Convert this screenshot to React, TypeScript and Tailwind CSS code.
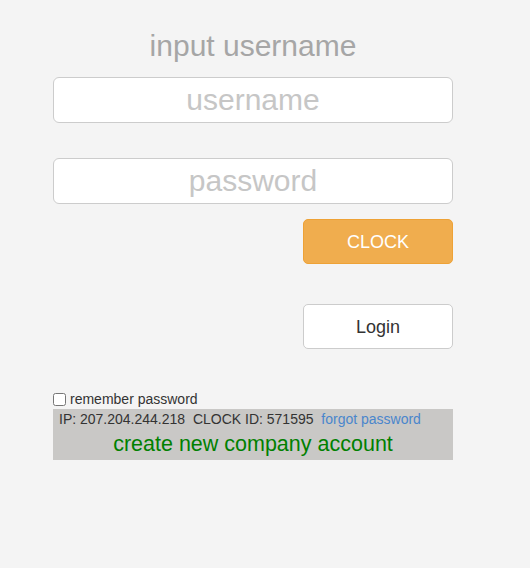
export default function App() {
  return (
    <div className="min-h-[568px] w-full bg-[#f4f4f4] font-['Liberation_Sans',Arial,sans-serif]">
      <div className="ml-[53px] w-[400px] pt-[30px]">
        <div className="text-center text-[30px] leading-[32px] text-[#a6a6a6]">input username</div>
        <input
          type="text"
          placeholder="username"
          className="mt-[15px] block h-[46px] w-full rounded-[6px] border border-[#cccccc] bg-white px-3 text-center text-[30px] outline-none placeholder:text-[#c6c6c6]"
        />
        <input
          type="password"
          placeholder="password"
          className="mt-[35px] block h-[46px] w-full rounded-[6px] border border-[#cccccc] bg-white px-3 text-center text-[30px] outline-none placeholder:text-[#c6c6c6]"
        />
        <div className="flex justify-end">
          <button className="mt-[15px] h-[45px] w-[150px] rounded-[5px] border border-[#eea236] bg-[#f0ad4e] pt-[2px] text-[18px] text-white">
            CLOCK
          </button>
        </div>
        <div className="flex justify-end">
          <button className="mt-[40px] h-[45px] w-[150px] rounded-[5px] border border-[#cccccc] bg-white pt-[2px] text-[18px] text-[#333]">
            Login
          </button>
        </div>
        <label className="mt-[42px] flex items-center gap-[4px] text-[14px] leading-[17px] text-[#333]">
          <input type="checkbox" className="m-0 h-[13px] w-[13px]" />
          remember password
        </label>
        <div className="mt-[1px] h-[51px] bg-[#c9c8c6] pt-[1px]">
          <div className="pl-[6px] text-[14px] leading-[18px] text-[#333]">
            IP: 207.204.244.218&nbsp; CLOCK ID: 571595&nbsp; <span className="text-[#4a86cc]">forgot password</span>
          </div>
          <div className="mt-[3px] text-center text-[21.5px] leading-[27px] text-[#008000]">create new company account</div>
        </div>
      </div>
    </div>
  );
}
